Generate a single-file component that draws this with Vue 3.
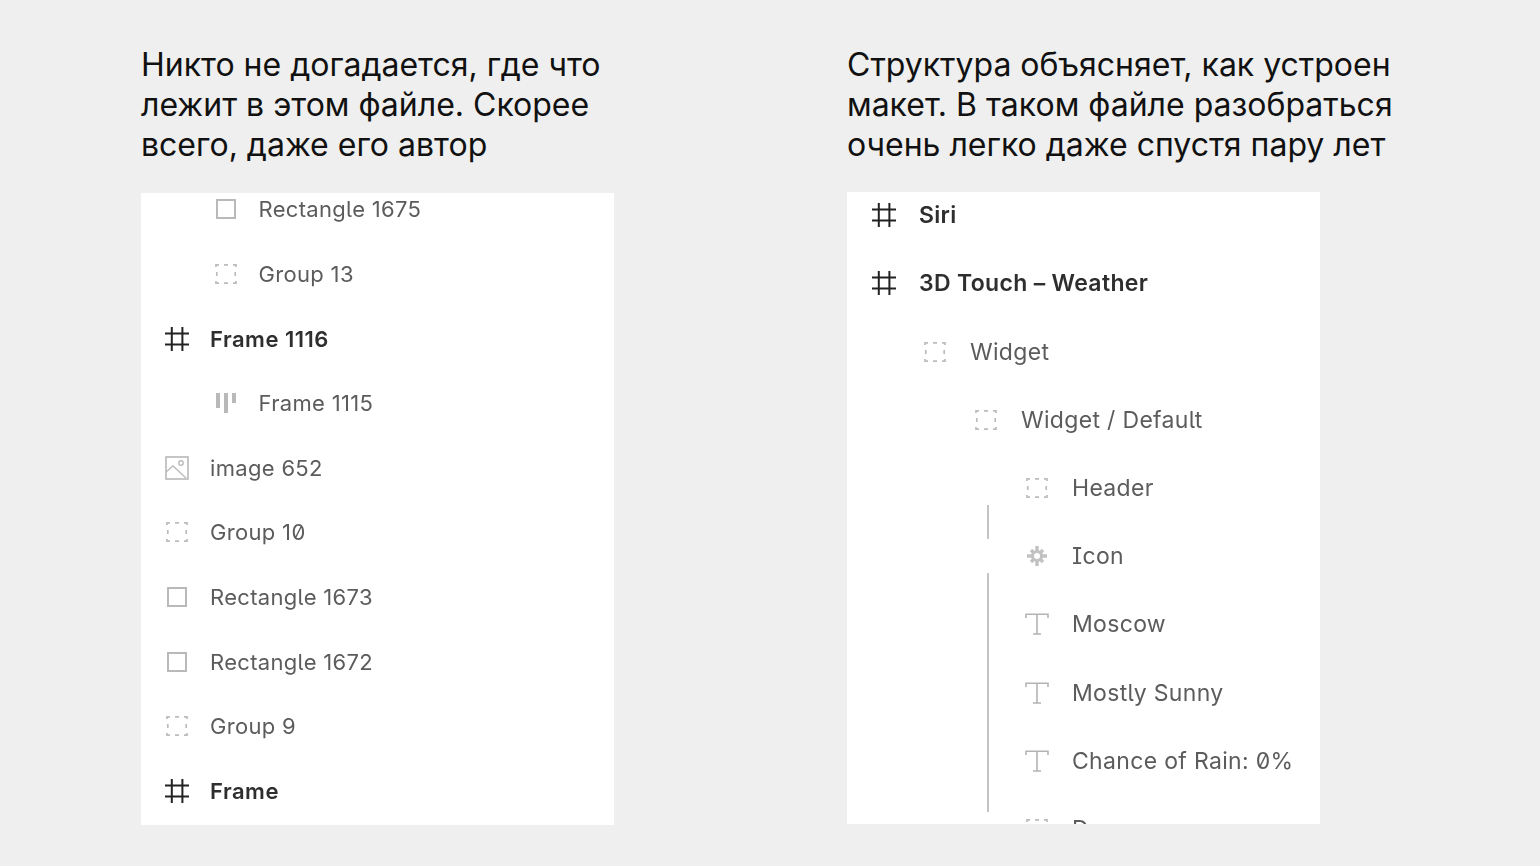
<script setup>
const leftLines = ['Никто не догадается, где что', 'лежит в этом файле. Скорее', 'всего, даже его автор']
const rightLines = ['Структура объясняет, как устроен', 'макет. В таком файле разобраться', 'очень легко даже спустя пару лет']

const leftRows = [
  { icon: 'rect', label: 'Rectangle 1675', depth: 1 },
  { icon: 'group', label: 'Group 13', depth: 1 },
  { icon: 'hash', label: 'Frame 1116', depth: 0 },
  { icon: 'bars', label: 'Frame 1115', depth: 1 },
  { icon: 'image', label: 'image 652', depth: 0 },
  { icon: 'group', label: 'Group 10', depth: 0 },
  { icon: 'rect', label: 'Rectangle 1673', depth: 0 },
  { icon: 'rect', label: 'Rectangle 1672', depth: 0 },
  { icon: 'group', label: 'Group 9', depth: 0 },
  { icon: 'hash', label: 'Frame', depth: 0 }
]
const rightRows = [
  { icon: 'hash', label: 'Siri', depth: 0 },
  { icon: 'hash', label: '3D Touch – Weather', depth: 0 },
  { icon: 'group', label: 'Widget', depth: 1 },
  { icon: 'group', label: 'Widget / Default', depth: 2 },
  { icon: 'group', label: 'Header', depth: 3 },
  { icon: 'gear', label: 'Icon', depth: 3 },
  { icon: 'text', label: 'Moscow', depth: 3 },
  { icon: 'text', label: 'Mostly Sunny', depth: 3 },
  { icon: 'text', label: 'Chance of Rain: 0%', depth: 3 },
  { icon: 'group', label: 'Days', depth: 3 }
]
const panels = [
  { id: 'a', lines: leftLines, rows: leftRows, indent: 48.5 },
  { id: 'b', lines: rightLines, rows: rightRows, indent: 51 }
]
</script>

<template>
  <main class="page">
    <section v-for="p in panels" :key="p.id" class="col" :class="'col-' + p.id">
      <h2 class="title">
        <span v-for="l in p.lines" :key="l" class="line">{{ l }}</span>
      </h2>
      <div class="panel">
        <div class="list">
          <div
            v-for="r in p.rows"
            :key="r.label"
            class="row"
            :class="{ strong: r.icon === 'hash' }"
            :style="{ paddingLeft: r.depth * p.indent + 'px' }"
          >
            <svg class="icon" viewBox="0 0 24 24" fill="none" stroke-width="2">
              <g v-if="r.icon === 'hash'" stroke="#222">
                <path d="M6.8 0v24M17.4 0v24M0 6.6h24M0 17.4h24" />
              </g>
              <rect v-else-if="r.icon === 'rect'" x="3" y="3" width="18" height="18" stroke="#b9b9b9" />
              <path
                v-else-if="r.icon === 'group'"
                stroke="#bcbcbc"
                stroke-width="1.7"
                d="M2 5V2.8h3M10 2.8h4M19 2.8h3V5M2.8 10v4M21.2 10v4M2 19v2.2h3M10 21.2h4M19 21.2h3V19"
              />
              <g v-else-if="r.icon === 'bars'" fill="#b9b9b9" stroke="none">
                <rect x="2" y="2" width="4" height="15" />
                <rect x="10" y="2" width="4" height="20" />
                <rect x="18" y="2" width="4" height="10" />
              </g>
              <g v-else-if="r.icon === 'image'" stroke="#bcbcbc">
                <rect x="1" y="1" width="22" height="22" stroke-width="1.7" />
                <path stroke-width="1.4" d="M1 16l7-6 13 12" />
                <circle cx="16" cy="7" r="2.2" stroke-width="1.4" />
              </g>
              <g v-else-if="r.icon === 'gear'" stroke="#c2c2c2">
                <circle cx="12" cy="12" r="4.5" stroke-width="3" />
                <path stroke-width="3.4" d="M12 2v5M12 17v5M2 12h5M17 12h5M6 6l2.5 2.5M15.5 15.5l2.5 2.5M18 6l-2.5 2.5M8.5 15.5l-2.5 2.5" />
              </g>
              <path
                v-else-if="r.icon === 'text'"
                stroke="#b4b4b4"
                stroke-width="1.6"
                d="M1 6V2.2h22V6M12 2.2v20M8 22h8"
              />
            </svg>
            <span class="label">{{ r.label }}</span>
          </div>
        </div>
        <template v-if="p.id === 'b'">
          <i class="guide guide-top"></i>
          <i class="guide guide-bottom"></i>
        </template>
      </div>
    </section>
  </main>
</template>

<style>
html,
body {
  margin: 0;
  background: #efefef;
}
</style>

<style scoped>
.page {
  display: flex;
  gap: 233px;
  width: 1540px;
  height: 866px;
  box-sizing: border-box;
  padding: 45px 0 0 141px;
  overflow: hidden;
}
.col {
  width: 473px;
  flex: none;
}
.title {
  margin: 0;
  font: 400 32px/40px Inter, "Liberation Sans", sans-serif;
  color: #111;
  white-space: nowrap;
}
.line {
  display: block;
}
.panel {
  position: relative;
  height: 632px;
  background: #fff;
  overflow: hidden;
  margin-top: 28px;
}
.col-b .panel {
  margin-top: 27px;
}
.list {
  filter: blur(0.5px);
  font-family: Inter, "Liberation Sans", sans-serif;
  font-feature-settings: "zero", "ss02";
  letter-spacing: 0.32px;
  color: #5c5c5c;
}
.col-a .list {
  margin-top: -15.95px;
  padding-left: 24px;
  font-size: 22px;
}
.col-b .list {
  margin-top: -10.9px;
  padding-left: 25px;
  font-size: 23px;
}
.row {
  display: flex;
  align-items: center;
  box-sizing: border-box;
  white-space: nowrap;
}
.col-a .row {
  height: 64.6px;
  gap: 21px;
}
.col-b .row {
  height: 68.2px;
  gap: 23px;
}
.icon {
  display: block;
  flex: none;
  width: 24px;
  height: 24px;
}
.strong {
  font-weight: 600;
  color: #2e2e2e;
}
.col-a .strong {
  letter-spacing: 0.5px;
}
.guide {
  position: absolute;
  left: 140px;
  width: 2px;
  background: #c4c4c4;
}
.guide-top {
  top: 313px;
  height: 34px;
}
.guide-bottom {
  top: 381px;
  height: 239px;
}
</style>
